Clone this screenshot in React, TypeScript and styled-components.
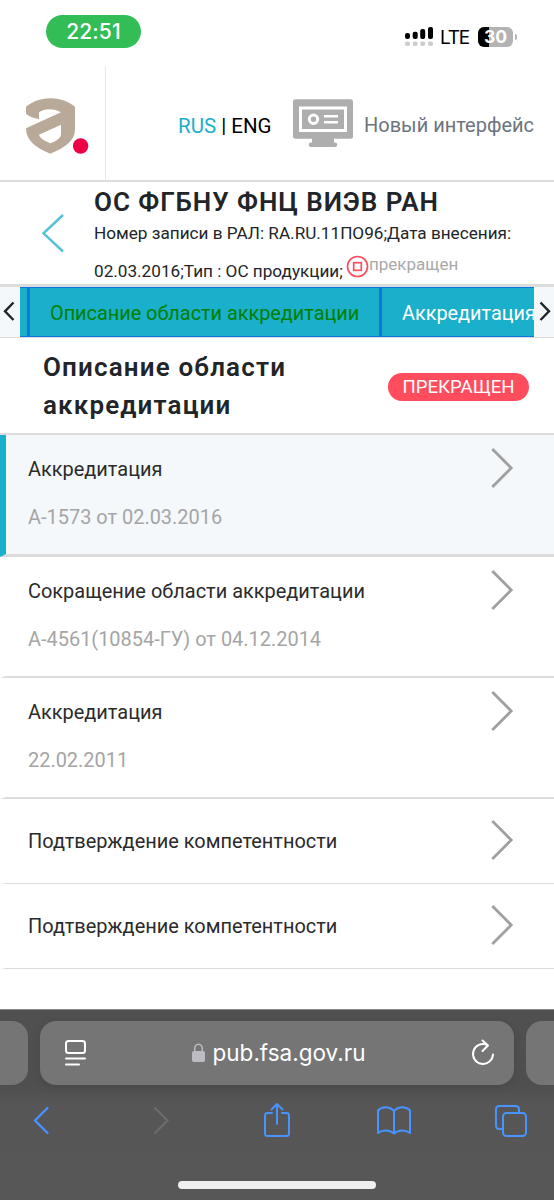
import React from "react";
import styled, { createGlobalStyle } from "styled-components";

const GlobalStyle = createGlobalStyle`
  *, *::before, *::after { box-sizing: border-box; }
  html, body { margin: 0; padding: 0; background: #fff; }
  body { width: 554px; height: 1200px; overflow: hidden; font-family: Roboto, "Noto Sans", sans-serif; color: #212529; }
  svg { display: block; flex: none; }
`;

const Screen = styled.div`
  display: flex;
  flex-direction: column;
  width: 554px;
  height: 1200px;
  background: #fff;
  overflow: hidden;
`;

const StatusBar = styled.div`
  display: flex;
  justify-content: space-between;
  height: 67px;
  padding: 15px 37px 0 46px;
  font-family: Inter, "Noto Sans", sans-serif;
`;

const TimePill = styled.div`
  width: 95px;
  height: 33px;
  border-radius: 16.5px;
  background: #33bd57;
  color: #fff;
  font-size: 21px;
  font-weight: 500;
  line-height: 33px;
  text-align: center;
  letter-spacing: 0.1px;
`;

const StatusRight = styled.div`
  display: flex;
  align-items: flex-start;
  padding-top: 11px;
`;

const Network = styled.span`
  width: 45px;
  padding-left: 7px;
  font-size: 19px;
  line-height: 23px;
  letter-spacing: -1.2px;
  color: #000;
`;

const Battery = styled.div`
  width: 35px;
  height: 20px;
  margin-top: 1px;
  border-radius: 6px;
  background: linear-gradient(90deg, #000 11px, #b3b3b3 11px);
  color: #fff;
  font-size: 17.5px;
  font-weight: 700;
  line-height: 20px;
  text-align: center;
`;

const BatteryTip = styled.div`
  width: 2px;
  height: 6px;
  margin: 8px 0 0 2px;
  border-radius: 0 3px 3px 0;
  background: #b3b3b3;
`;

const Header = styled.header`
  display: flex;
  height: 115px;
  border-bottom: 2px solid #dcdcdc;
`;

const LogoCell = styled.div`
  width: 106px;
  padding: 31px 0 0 25px;
  border-right: 1px solid #e8e8e8;
`;

const Languages = styled.div`
  display: flex;
  width: 187px;
  padding: 47px 0 0 72px;
  font-size: 20.5px;
  line-height: 24px;
  color: #000;
  white-space: pre;
`;

const ActiveLanguage = styled.span`
  color: #1aafca;
`;

const NewUi = styled.div`
  display: flex;
  padding-top: 32px;
  color: #6c757d;
  font-size: 20px;
  line-height: 24px;
  white-space: nowrap;
`;

const NewUiLabel = styled.span`
  padding: 14px 0 0 11px;
`;

const Organization = styled.section`
  display: flex;
  height: 105px;
  border-bottom: 3px solid #dcdcdc;
`;

const BackCell = styled.div`
  width: 94px;
  padding: 31px 0 0 41px;
`;

const OrgName = styled.h1`
  margin: 5px 0 0;
  font-size: 26px;
  font-weight: 600;
  line-height: 30px;
  letter-spacing: 0.95px;
  white-space: nowrap;
`;

const OrgLine = styled.div`
  display: flex;
  height: 38px;
  font-size: 17.17px;
  line-height: 32px;
  white-space: nowrap;
`;

const StateIcon = styled.svg`
  margin: 0 0 0 3px;
`;

const StateText = styled.span`
  margin-top: -7px;
  color: #a9a9a9;
  font-size: 17px;
`;

const Tabs = styled.nav`
  display: flex;
  height: 51px;
  border-bottom: 1px solid #dcdcdc;
  background: #f4f8fb;
`;

const TabScroll = styled.div`
  width: 20px;
  height: 50px;
  flex: none;
  background: #f4f8fb;
`;

const TabStrip = styled.div`
  display: flex;
  flex: 1;
  overflow: hidden;
  padding-left: 7px;
  background: #1aafca;
  border: solid #0878dc;
  border-width: 1px 0;
`;

const Tab = styled.div<{ $current?: boolean }>`
  flex: none;
  width: ${(p) => (p.$current ? 352 : 155)}px;
  padding-left: 20px;
  border-left: 3px solid #0878dc;
  color: ${(p) => (p.$current ? "#008000" : "#fff")};
  font-size: 19.85px;
  line-height: 51px;
  white-space: nowrap;
`;

const SectionHead = styled.div`
  display: flex;
  justify-content: space-between;
  height: 97px;
  padding: 10px 25px 0 43px;
  border-bottom: 2px solid #dcdcdc;
`;

const SectionTitle = styled.h2`
  margin: 0;
  width: 280px;
  font-size: 26px;
  font-weight: 600;
  line-height: 38px;
  letter-spacing: 1.15px;
`;

const Badge = styled.div`
  width: 141px;
  height: 28px;
  margin-top: 25px;
  border-radius: 14px;
  background: #ff4d5e;
  color: #fff;
  font-size: 18.6px;
  line-height: 28px;
  text-align: center;
`;

const Row = styled.div<{ $height: number; $selected?: boolean }>`
  display: flex;
  justify-content: space-between;
  height: ${(p) => p.$height}px;
  padding: ${(p) => (p.$height > 100 ? 12 : 20)}px 40px 0 22px;
  border-left: 6px solid ${(p) => (p.$selected ? "#1aafca" : "transparent")};
  border-bottom: ${(p) => (p.$selected ? 3 : p.$height > 100 ? 2 : 1.5)}px solid #dcdcdc;
  background: ${(p) => (p.$selected ? "#f4f8fb" : "#fff")};
`;

const RowText = styled.div`
  padding-top: 8px;
  color: #2b2b2b;
  font-size: 19.95px;
  line-height: 28px;
  white-space: nowrap;
`;

const RowNote = styled.div`
  margin-top: 20px;
  color: #a5a5a5;
`;

const Browser = styled.footer`
  display: flex;
  flex-direction: column;
  height: 191px;
  margin-top: auto;
  border-top: 1px solid #8b8b8b;
  background: linear-gradient(#505050, #4f4f4f 75px, #565656 95px, #575757);
`;

const AddressStrip = styled.div`
  display: flex;
  gap: 12px;
  height: 64px;
  margin-top: 11px;
`;

const SideTab = styled.div<{ $right?: boolean }>`
  width: 28px;
  border-radius: ${(p) => (p.$right ? "16px 0 0 16px" : "0 16px 16px 0")};
  background: #757575;
`;

const Address = styled.div`
  display: flex;
  align-items: center;
  width: 474px;
  padding: 0 19px 0 24px;
  border-radius: 16px;
  background: #757575;
  box-shadow: 0 2px 10px rgba(0, 0, 0, 0.1);
`;

const Host = styled.div`
  display: flex;
  flex: 1;
  align-items: center;
  justify-content: center;
  gap: 8px;
  padding-right: 1px;
  color: #fff;
  font-family: Inter, "Noto Sans", sans-serif;
  font-size: 22.5px;
  line-height: 30px;
`;

const Toolbar = styled.div`
  display: grid;
  grid-template-columns: 119.5px 110.5px 113px 118px 34px;
  height: 50px;
  margin-top: 16px;
  padding-left: 33px;
`;

const HomeBar = styled.div`
  width: 198px;
  height: 8px;
  margin: 30px 0 0 178px;
  border-radius: 4px;
  background: #efefef;
`;

const Signal = () => (
  <svg width="28" height="21" viewBox="0 0 28 21">
    <g fill="#000">
      <rect x="0" y="7" width="5" height="6" rx="2.2" />
      <rect x="7.7" y="5.7" width="5" height="7.3" rx="2" />
      <rect x="15.2" y="3" width="5" height="10" rx="2" />
      <rect x="23" y="1" width="5" height="12" rx="2" />
    </g>
    <g fill="#ccc">
      {[0, 7.7, 15.2, 23].map((x) => (
        <rect key={x} x={x} y="15.5" width="5" height="4.6" rx="2" />
      ))}
    </g>
  </svg>
);

const Logo = () => (
  <svg width="64" height="58" viewBox="0 0 64 58">
    <path
      fill="#b8a999"
      fillRule="evenodd"
      d="M1 8.700C15-2.500 36-2.500 50 8.700V31.500C50 43 40 49.500 25.300 55.700C10 49.500 1 42 1 30.300L36 14.300C29 10.300 20 10.300 14 14.200V21C9 20.500 4 18.500 1 15.800ZM36 26.700L14 36.700C15 40 18.500 42.500 25.500 45.200C32 42.500 36 40 36 36Z"
    />
    <circle cx="55.600" cy="48" r="7.700" fill="#ed0047" />
  </svg>
);

const Monitor = () => (
  <svg width="60" height="50" viewBox="0 0 60 50">
    <rect width="60" height="39.500" y="0.300" rx="2.500" fill="#aeaeae" />
    <path d="M19 39h22v4.500H42a2.300 2.300 0 0 1 0 4.600H18a2.300 2.300 0 0 1 0-4.600h1z" fill="#aeaeae" />
    <rect x="7.500" y="9" width="45" height="22.500" fill="none" stroke="#fff" strokeWidth="3" />
    <circle cx="20.500" cy="20.300" r="4.200" fill="none" stroke="#fff" strokeWidth="3" />
    <path d="M31 17.300h14M31 23.300h14" stroke="#fff" strokeWidth="2.600" />
  </svg>
);

const Chevron = () => (
  <svg width="24" height="42" viewBox="0 0 24 42">
    <path d="M2.300 2L21.200 21L2.300 40" fill="none" stroke="#a0a0a0" strokeWidth="2.800" />
  </svg>
);

type Entry = { title: string; note?: string; height: number; selected?: boolean };

const entries: Entry[] = [
  { title: "Аккредитация", note: "А-1573 от 02.03.2016", height: 122, selected: true },
  { title: "Сокращение области аккредитации", note: "А-4561(10854-ГУ) от 04.12.2014", height: 121 },
  { title: "Аккредитация", note: "22.02.2011", height: 121 },
  { title: "Подтверждение компетентности", height: 85 },
  { title: "Подтверждение компетентности", height: 85 },
];

export default function App() {
  return (
    <>
      <GlobalStyle />
      <Screen>
        <StatusBar>
          <TimePill>22:51</TimePill>
          <StatusRight>
            <Signal />
            <Network>LTE</Network>
            <Battery>30</Battery>
            <BatteryTip />
          </StatusRight>
        </StatusBar>

        <Header>
          <LogoCell>
            <Logo />
          </LogoCell>
          <Languages>
            <ActiveLanguage>RUS</ActiveLanguage> | ENG
          </Languages>
          <NewUi>
            <Monitor />
            <NewUiLabel>Новый интерфейс</NewUiLabel>
          </NewUi>
        </Header>

        <Organization>
          <BackCell>
            <svg width="24" height="40" viewBox="0 0 24 40">
              <path d="M22 2L2.500 20.300L22 38.500" fill="none" stroke="#54c2d7" strokeWidth="2.500" />
            </svg>
          </BackCell>
          <div>
            <OrgName>ОС ФГБНУ ФНЦ ВИЭВ РАН</OrgName>
            <OrgLine>Номер записи в РАЛ: RA.RU.11ПО96;Дата внесения:</OrgLine>
            <OrgLine>
              <span>02.03.2016;Тип : ОС продукции;</span>
              <StateIcon width="23" height="23" viewBox="0 0 23 23" fill="none" stroke="#ff4d5e" strokeWidth="1.700">
                <circle cx="11.500" cy="11.500" r="10" />
                <rect x="7.700" y="7.700" width="7.600" height="7.600" />
              </StateIcon>
              <StateText>прекращен</StateText>
            </OrgLine>
          </div>
        </Organization>

        <Tabs>
          <TabScroll>
            <svg width="20" height="50" viewBox="0 0 20 50">
              <path d="M13.500 15.500L5 24.300L13.500 33" fill="none" stroke="#212529" strokeWidth="2.400" />
            </svg>
          </TabScroll>
          <TabStrip>
            <Tab $current>Описание области аккредитации</Tab>
            <Tab>Аккредитация</Tab>
          </TabStrip>
          <TabScroll>
            <svg width="20" height="50" viewBox="0 0 20 50">
              <path d="M6.500 15.500L15 24.300L6.500 33" fill="none" stroke="#212529" strokeWidth="2.400" />
            </svg>
          </TabScroll>
        </Tabs>

        <SectionHead>
          <SectionTitle>Описание области аккредитации</SectionTitle>
          <Badge>ПРЕКРАЩЕН</Badge>
        </SectionHead>

        {entries.map((entry, i) => (
          <Row key={i} $height={entry.height} $selected={entry.selected}>
            <RowText>
              {entry.title}
              {entry.note && <RowNote>{entry.note}</RowNote>}
            </RowText>
            <Chevron />
          </Row>
        ))}

        <Browser>
          <AddressStrip>
            <SideTab />
            <Address>
              <svg width="23" height="28" viewBox="0 0 23 28" fill="none" stroke="#fff" strokeWidth="2" strokeLinecap="round">
                <rect x="2" y="2" width="19" height="12" rx="2.500" />
                <path d="M2 19.500h19M2 25.500h13" />
              </svg>
              <Host>
                <svg width="13" height="20" viewBox="0 0 13 20">
                  <path d="M2.700 9V5.500a3.800 4.300 0 0 1 7.600 0V9" fill="none" stroke="#bdbcc3" strokeWidth="1.500" />
                  <rect y="8" width="13" height="11" rx="2" fill="#bdbcc3" />
                </svg>
                pub.fsa.gov.ru
              </Host>
              <svg width="24" height="28" viewBox="0 0 24 28" fill="none" stroke="#fff" strokeWidth="2" strokeLinecap="round" strokeLinejoin="round">
                <path d="M16 5.800A10 10 0 1 0 22 15.500M11.500 1.500L17 6.500L11.500 12" />
              </svg>
            </Address>
            <SideTab $right />
          </AddressStrip>
          <Toolbar>
            <svg width="17" height="40" viewBox="0 0 17 40">
              <path d="M14.500 7L2 19.500L14.500 32" fill="none" stroke="#4793ff" strokeWidth="2.200" strokeLinecap="round" />
            </svg>
            <svg width="17" height="40" viewBox="0 0 17 40">
              <path d="M2 7L14.500 19.500L2 32" fill="none" stroke="#6c6c6c" strokeWidth="2.200" strokeLinecap="round" />
            </svg>
            <svg width="28" height="40" viewBox="0 0 28 40" fill="none" stroke="#4793ff" strokeWidth="2" strokeLinecap="round" strokeLinejoin="round">
              <path d="M9 12H4.500Q2 12 2 14.500V32.500Q2 35 4.500 35H23.500Q26 35 26 32.500V14.500Q26 12 23.500 12H19M14 23V3M8.500 8.500L14 3L19.500 8.500" />
            </svg>
            <svg width="36" height="40" viewBox="0 0 36 40" fill="none" stroke="#4793ff" strokeWidth="2" strokeLinejoin="round">
              <path d="M18 10C13.500 5 6 5 2 9.500V32C6.500 28.500 13.500 28.500 18 32.500C22.500 28.500 29.500 28.500 34 32V9.500C30 5 22.500 5 18 10V32.500" />
            </svg>
            <svg width="34" height="40" viewBox="0 0 34 40" fill="none" stroke="#4793ff" strokeWidth="2">
              <path d="M8.500 28H5.500Q2 28 2 24.500V8.500Q2 5 5.500 5H21.500Q25 5 25 8.500V12" />
              <rect x="9" y="12" width="23" height="23" rx="3.500" />
            </svg>
          </Toolbar>
          <HomeBar />
        </Browser>
      </Screen>
    </>
  );
}
